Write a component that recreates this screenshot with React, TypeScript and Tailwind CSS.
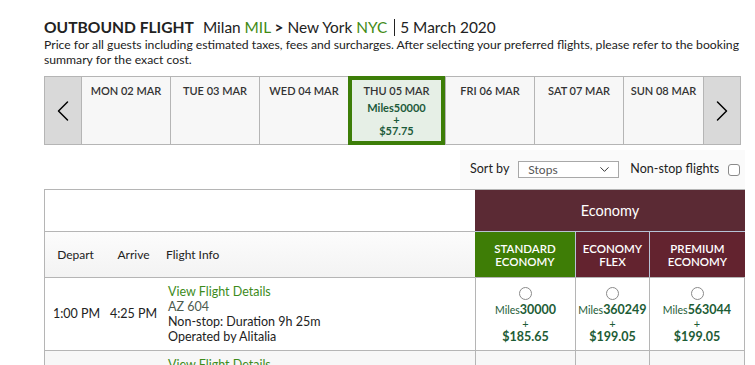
import { ChevronDown, ChevronLeft, ChevronRight } from "lucide-react";

const days = [
    { label: "MON 02 MAR", w: "w-[89px]" },
    { label: "TUE 03 MAR", w: "w-[89px]" },
    { label: "WED 04 MAR", w: "w-[89px]" },
];
const laterDays = [
    { label: "FRI 06 MAR", w: "w-[89px]" },
    { label: "SAT 07 MAR", w: "w-[89px]" },
    { label: "SUN 08 MAR", w: "w-[80px]" },
];

const fares = [
    { miles: "30000", price: "$185.65", w: "w-[100px]" },
    { miles: "360249", price: "$199.05", w: "w-[74px]" },
    { miles: "563044", price: "$199.05", w: "w-[96px] border-r" },
];

function DayCell({ label, w }: { label: string; w: string }) {
    return (
        <div className={`${w} border-l border-[#b5b5b5] bg-[#f7f7f7] pt-[7px] text-center text-[11px] font-semibold leading-[13px] text-[#333]`}>
            {label}
        </div>
    );
}

function FlightInfo() {
    return (
        <div className="flex-1 pl-[7px] text-[12.5px] leading-[15px] text-[#222]">
            <div className="text-[#3d8b1b]">View Flight Details</div>
            <div className="text-[#4d5b50]">AZ 604</div>
            <div>Non-stop: Duration 9h 25m</div>
            <div>Operated by Alitalia</div>
        </div>
    );
}

export default function App() {
    return (
        <div className="h-[365px] overflow-hidden bg-white pl-[44px] pt-[17px] font-[Lato,sans-serif] text-[#222]">
            {/* heading */}
            <div className="flex items-center text-[15.4px] leading-[20px]">
                <span className="text-[15.6px] font-bold">OUTBOUND FLIGHT</span>
                <span className="ml-[9px]">
                    Milan <span className="text-[#3f8a14]">MIL</span> <b>&gt;</b> New York{" "}
                    <span className="text-[#3f8a14]">NYC</span>
                </span>
                <span className="ml-[7px] border-l border-[#222] pl-[5px] leading-[17px]">5 March 2020</span>
            </div>
            <p className="w-[704px] text-[12.2px] leading-[15px]">
                Price for all guests including estimated taxes, fees and surcharges. After selecting your preferred flights, please refer to the booking summary for the exact cost.
            </p>

            {/* date strip */}
            <div className="mt-[9px] flex h-[69px] w-[697px] border border-[#b5b5b5]">
                <div className="flex w-[36px] items-center justify-center bg-[#d9d9d9]">
                    <ChevronLeft className="h-[40px] w-[40px] text-black" strokeWidth={1} />
                </div>
                {days.map((d) => (
                    <DayCell key={d.label} {...d} />
                ))}
                <div className="-my-px h-[69px] w-[97px] border-4 border-[#3d7e08] bg-[#e6efe6] pt-[4px] text-center text-[11px] font-semibold leading-[13px] text-[#333]">
                    THU 05 MAR
                    <div className="mt-[5px] font-bold leading-[11.5px] text-[#1c5a3a]">
                        <div>Miles50000</div>
                        <div>+</div>
                        <div>$57.75</div>
                    </div>
                </div>
                {laterDays.map((d) => (
                    <DayCell key={d.label} {...d} />
                ))}
                <div className="flex w-[37px] items-center justify-center border-l border-[#b5b5b5] bg-[#d9d9d9]">
                    <ChevronRight className="h-[40px] w-[40px] text-black" strokeWidth={1} />
                </div>
            </div>

            {/* sort */}
            <div className="mt-[5px] ml-[416px] flex h-[39px] w-[285px] items-center bg-[#fafafa] pl-[10px] text-[12.5px]">
                <span>Sort by</span>
                <div className="ml-[9px] flex h-[17px] w-[101px] items-center justify-between border border-[#a8a8a8] bg-white pl-[9px] pr-[6px] text-[12px] text-[#555]">
                    <span>Stops</span>
                    <ChevronDown className="h-[15px] w-[15px] text-[#333]" strokeWidth={1.6} />
                </div>
                <span className="ml-[11px]">Non-stop flights</span>
                <span className="ml-[9px] h-[12px] w-[12px] rounded-[3px] border border-[#8a8a8a] bg-white" />
            </div>

            {/* table */}
            <div className="w-[701px] border-l border-t border-[#b5b5b5]">
                <div className="flex h-[41px]">
                    <div className="w-[430px] bg-white" />
                    <div className="flex w-[270px] items-center justify-center bg-[#5b2a34] text-[14.5px] text-white">
                        Economy
                    </div>
                </div>
                <div className="flex h-[46px] border-t border-[#b5b5b5]">
                    <div className="flex w-[430px] items-center bg-linear-to-b from-[#fcfcfc] to-[#f3f3f3] text-[12px]">
                        <div className="w-[61px] text-center">Depart</div>
                        <div className="w-[55px] text-center">Arrive</div>
                        <div className="pl-[5px]">Flight Info</div>
                    </div>
                    <div className="-mt-px flex w-[100px] items-center justify-center border-t border-[#b7c3d6] bg-[#3e7d06] text-center text-[11.5px] font-semibold leading-[13px] text-white">
                        STANDARD<br />ECONOMY
                    </div>
                    <div className="-mt-px flex w-[74px] items-center justify-center border-l border-t border-[#b7c3d6] bg-[#63232f] text-center text-[11.5px] font-semibold leading-[13px] text-white">
                        ECONOMY<br />FLEX
                    </div>
                    <div className="-mt-px flex w-[96px] items-center justify-center border-l border-t border-[#b7c3d6] bg-[#63232f] text-center text-[11.5px] font-semibold leading-[13px] text-white">
                        PREMIUM<br />ECONOMY
                    </div>
                </div>

                <div className="flex h-[73px] border-t border-[#b5b5b5]">
                    <div className="flex w-[430px] items-center text-[12.5px]">
                        <div className="w-[61px] pl-[2px] text-center">1:00 PM</div>
                        <div className="w-[55px] text-center">4:25 PM</div>
                        <FlightInfo />
                    </div>
                    {fares.map((f) => (
                        <div key={f.miles} className={`${f.w} border-l border-[#b5b5b5] pt-[9px] text-center leading-[13px] text-[#1d5c36]`}>
                            <div className="mx-auto h-[13px] w-[13px] rounded-full border border-[#8a8a8a] bg-white" />
                            <div className="mt-[1px]">
                                <span className="text-[10.5px]">Miles</span>
                                <span className="text-[12.5px] font-bold">{f.miles}</span>
                            </div>
                            <div className="text-[11px]">+</div>
                            <div className="text-[12.5px] font-bold">{f.price}</div>
                        </div>
                    ))}
                </div>

                <div className="flex h-[73px] border-t border-[#b5b5b5] bg-[#f7f7f7]">
                    <div className="flex w-[430px] items-start pt-[6px] text-[12.5px]">
                        <div className="w-[61px]" />
                        <div className="w-[55px]" />
                        <FlightInfo />
                    </div>
                    {fares.map((f) => (
                        <div key={f.miles} className={`${f.w} border-l border-[#b5b5b5]`} />
                    ))}
                </div>
            </div>
        </div>
    );
}
